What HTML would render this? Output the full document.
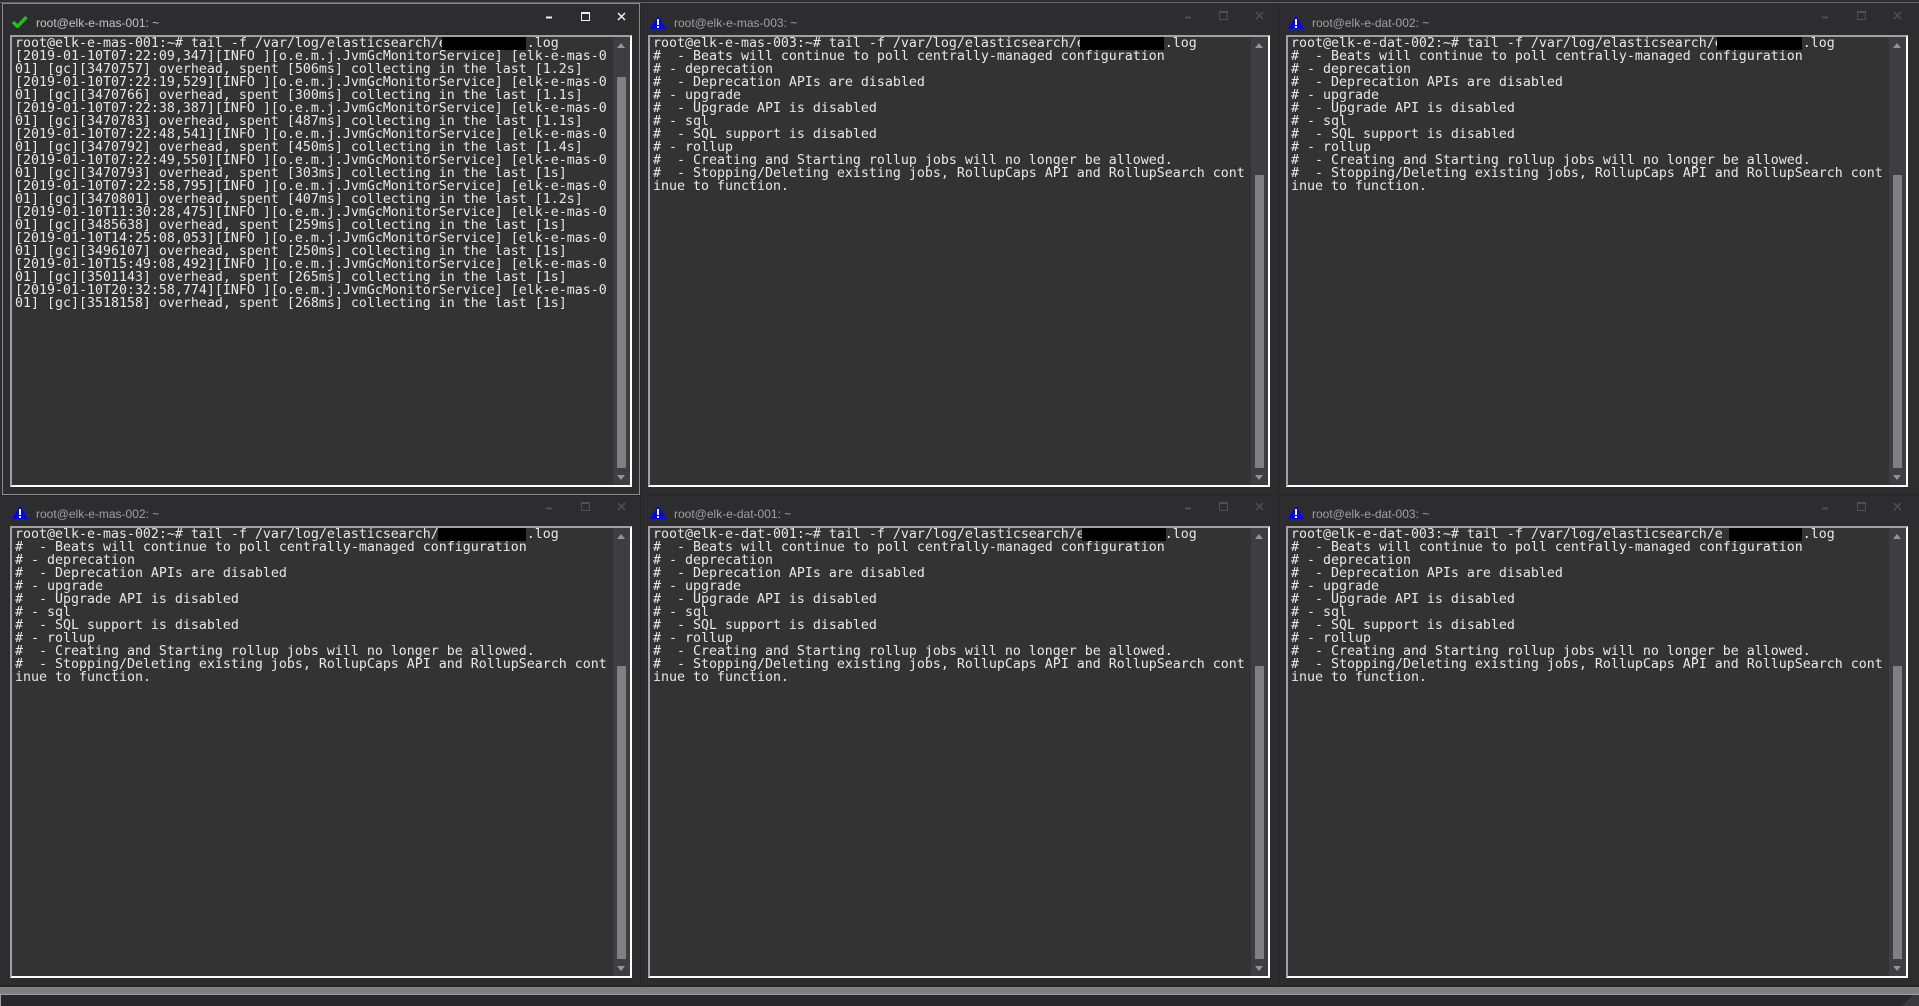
<!DOCTYPE html>
<html><head><meta charset="utf-8">
<style>
html,body{margin:0;padding:0;background:#2d2d30;width:1919px;height:1006px;overflow:hidden}
.a{position:absolute}
.t{position:absolute;left:36px;top:15px;font:12px/16px "Liberation Sans",sans-serif;color:#a0a0a0;white-space:pre}
.f{position:absolute;box-sizing:border-box;width:622px;background:#333;border:2px solid;border-color:#a0a0a0 #fff #fff #a0a0a0}
pre{position:absolute;left:3px;top:0;margin:0;font:13.29px/13px "DejaVu Sans Mono",monospace;color:#e8e8e8}
.sb{position:absolute;right:0;top:0;bottom:0;width:17px;background:#3e3e42}
.th{position:absolute;left:4px;width:9px;background:#808080}
.up,.dn{position:absolute;left:4px;width:0;height:0;border-left:4.5px solid transparent;border-right:4.5px solid transparent}
.up{top:6px;border-bottom:5px solid #949494}
.dn{bottom:5px;border-top:5px solid #949494}
.k{position:absolute;top:0;height:13px;background:#000}
svg{position:absolute}
</style></head><body>

<div class="a" style="left:0;top:0;width:1919px;height:987px;background:#2d2d30"></div>
<div class="a" style="left:0;top:2px;width:1919px;height:1px;background:#666"></div>
<div class="a" style="left:0;top:985px;width:1919px;height:2px;background:#27272a"></div>
<div class="a" style="left:640px;top:3px;width:1px;height:982px;background:#27272a"></div>
<div class="a" style="left:1278px;top:3px;width:1px;height:982px;background:#27272a"></div>
<div class="a" style="left:0;top:495px;width:1919px;height:1px;background:#27272a"></div>
<div class="a" style="left:2px;top:3px;width:638px;height:492px;box-sizing:border-box;border:1px solid #8a8a8a"></div>

<!-- Pane 1 -->
<svg style="left:12px;top:15px" width="16" height="13" viewBox="0 0 16 13"><path d="M1 7l4.500 4.500L14.500 2" fill="none" stroke="#16c616" stroke-width="3.400"/></svg>
<div class="t" style="color:#c4c4c4">root@elk-e-mas-001: ~</div>
<svg style="left:546px;top:12px" width="80" height="10" viewBox="0 0 80 10" fill="none" stroke="#eee"><path d="M0 5.500h6" stroke-width="2"/><rect x="35.500" y="0.500" width="8" height="8"/><path d="M35.500 1h8" stroke-width="2"/><path d="M72 1l7 7M79 1l-7 7" stroke-width="1.500"/></svg>
<div class="f" style="left:10px;top:35px;height:452px">
<pre>root@elk-e-mas-001:~# tail -f /var/log/elasticsearch/e          .log
[2019-01-10T07:22:09,347][INFO ][o.e.m.j.JvmGcMonitorService] [elk-e-mas-0
01] [gc][3470757] overhead, spent [506ms] collecting in the last [1.2s]
[2019-01-10T07:22:19,529][INFO ][o.e.m.j.JvmGcMonitorService] [elk-e-mas-0
01] [gc][3470766] overhead, spent [300ms] collecting in the last [1.1s]
[2019-01-10T07:22:38,387][INFO ][o.e.m.j.JvmGcMonitorService] [elk-e-mas-0
01] [gc][3470783] overhead, spent [487ms] collecting in the last [1.1s]
[2019-01-10T07:22:48,541][INFO ][o.e.m.j.JvmGcMonitorService] [elk-e-mas-0
01] [gc][3470792] overhead, spent [450ms] collecting in the last [1.4s]
[2019-01-10T07:22:49,550][INFO ][o.e.m.j.JvmGcMonitorService] [elk-e-mas-0
01] [gc][3470793] overhead, spent [303ms] collecting in the last [1s]
[2019-01-10T07:22:58,795][INFO ][o.e.m.j.JvmGcMonitorService] [elk-e-mas-0
01] [gc][3470801] overhead, spent [407ms] collecting in the last [1.2s]
[2019-01-10T11:30:28,475][INFO ][o.e.m.j.JvmGcMonitorService] [elk-e-mas-0
01] [gc][3485638] overhead, spent [259ms] collecting in the last [1s]
[2019-01-10T14:25:08,053][INFO ][o.e.m.j.JvmGcMonitorService] [elk-e-mas-0
01] [gc][3496107] overhead, spent [250ms] collecting in the last [1s]
[2019-01-10T15:49:08,492][INFO ][o.e.m.j.JvmGcMonitorService] [elk-e-mas-0
01] [gc][3501143] overhead, spent [265ms] collecting in the last [1s]
[2019-01-10T20:32:58,774][INFO ][o.e.m.j.JvmGcMonitorService] [elk-e-mas-0
01] [gc][3518158] overhead, spent [268ms] collecting in the last [1s]</pre>
<div class="k" style="left:430px;width:84px"></div>
<div class="sb"><div class="up"></div><div class="th" style="top:40px;height:391px"></div><div class="dn"></div></div>
</div>

<!-- Pane 2 -->
<svg style="left:650px;top:16px" width="16" height="13" viewBox="0 0 16 13"><path d="M8 0L16 13H0z" fill="#0000ff"/><path d="M8 3v6M8 10v2" stroke="#fff" stroke-width="2"/></svg>
<div class="t" style="left:674px">root@elk-e-mas-003: ~</div>
<svg style="left:1184px;top:11px" width="80" height="10" viewBox="0 0 80 10" fill="none" stroke="#505050"><path d="M1 6.500h6" stroke-width="2"/><rect x="35.500" y="0.500" width="8" height="8"/><path d="M35.500 1h8" stroke-width="2"/><path d="M72 1l7 7M79 1l-7 7" stroke-width="1.500"/></svg>
<div class="f" style="left:648px;top:35px;height:452px">
<pre>root@elk-e-mas-003:~# tail -f /var/log/elasticsearch/e          .log
#  - Beats will continue to poll centrally-managed configuration
# - deprecation
#  - Deprecation APIs are disabled
# - upgrade
#  - Upgrade API is disabled
# - sql
#  - SQL support is disabled
# - rollup
#  - Creating and Starting rollup jobs will no longer be allowed.
#  - Stopping/Deleting existing jobs, RollupCaps API and RollupSearch cont
inue to function.</pre>
<div class="k" style="left:430px;width:84px"></div>
<div class="sb"><div class="up"></div><div class="th" style="top:138px;height:293px"></div><div class="dn"></div></div>
</div>

<!-- Pane 3 -->
<svg style="left:1288px;top:16px" width="16" height="13" viewBox="0 0 16 13"><path d="M8 0L16 13H0z" fill="#0000ff"/><path d="M8 3v6M8 10v2" stroke="#fff" stroke-width="2"/></svg>
<div class="t" style="left:1312px">root@elk-e-dat-002: ~</div>
<svg style="left:1822px;top:11px" width="80" height="10" viewBox="0 0 80 10" fill="none" stroke="#505050"><path d="M0 6.500h6" stroke-width="2"/><rect x="35.500" y="0.500" width="8" height="8"/><path d="M35.500 1h8" stroke-width="2"/><path d="M72 1l7 7M79 1l-7 7" stroke-width="1.500"/></svg>
<div class="f" style="left:1286px;top:35px;height:452px">
<pre>root@elk-e-dat-002:~# tail -f /var/log/elasticsearch/e          .log
#  - Beats will continue to poll centrally-managed configuration
# - deprecation
#  - Deprecation APIs are disabled
# - upgrade
#  - Upgrade API is disabled
# - sql
#  - SQL support is disabled
# - rollup
#  - Creating and Starting rollup jobs will no longer be allowed.
#  - Stopping/Deleting existing jobs, RollupCaps API and RollupSearch cont
inue to function.</pre>
<div class="k" style="left:429px;width:85px"></div>
<div class="sb"><div class="up"></div><div class="th" style="top:138px;height:293px"></div><div class="dn"></div></div>
</div>

<!-- Pane 4 -->
<svg style="left:12px;top:506px" width="16" height="13" viewBox="0 0 16 13"><path d="M8 0L16 13H0z" fill="#0000ff"/><path d="M8 3v6M8 10v2" stroke="#fff" stroke-width="2"/></svg>
<div class="t" style="top:506px">root@elk-e-mas-002: ~</div>
<svg style="left:546px;top:502px" width="80" height="10" viewBox="0 0 80 10" fill="none" stroke="#505050"><path d="M0 6.500h6" stroke-width="2"/><rect x="35.500" y="0.500" width="8" height="8"/><path d="M35.500 1h8" stroke-width="2"/><path d="M72 1l7 7M79 1l-7 7" stroke-width="1.500"/></svg>
<div class="f" style="left:10px;top:526px;height:452px">
<pre>root@elk-e-mas-002:~# tail -f /var/log/elasticsearch/e          .log
#  - Beats will continue to poll centrally-managed configuration
# - deprecation
#  - Deprecation APIs are disabled
# - upgrade
#  - Upgrade API is disabled
# - sql
#  - SQL support is disabled
# - rollup
#  - Creating and Starting rollup jobs will no longer be allowed.
#  - Stopping/Deleting existing jobs, RollupCaps API and RollupSearch cont
inue to function.</pre>
<div class="k" style="left:426px;width:88px"></div>
<div class="sb"><div class="up"></div><div class="th" style="top:138px;height:293px"></div><div class="dn"></div></div>
</div>

<!-- Pane 5 -->
<svg style="left:650px;top:506px" width="16" height="13" viewBox="0 0 16 13"><path d="M8 0L16 13H0z" fill="#0000ff"/><path d="M8 3v6M8 10v2" stroke="#fff" stroke-width="2"/></svg>
<div class="t" style="left:674px;top:506px">root@elk-e-dat-001: ~</div>
<svg style="left:1184px;top:502px" width="80" height="10" viewBox="0 0 80 10" fill="none" stroke="#505050"><path d="M1 6.500h6" stroke-width="2"/><rect x="35.500" y="0.500" width="8" height="8"/><path d="M35.500 1h8" stroke-width="2"/><path d="M72 1l7 7M79 1l-7 7" stroke-width="1.500"/></svg>
<div class="f" style="left:648px;top:526px;height:452px">
<pre>root@elk-e-dat-001:~# tail -f /var/log/elasticsearch/e          .log
#  - Beats will continue to poll centrally-managed configuration
# - deprecation
#  - Deprecation APIs are disabled
# - upgrade
#  - Upgrade API is disabled
# - sql
#  - SQL support is disabled
# - rollup
#  - Creating and Starting rollup jobs will no longer be allowed.
#  - Stopping/Deleting existing jobs, RollupCaps API and RollupSearch cont
inue to function.</pre>
<div class="k" style="left:432px;width:84px"></div>
<div class="sb"><div class="up"></div><div class="th" style="top:138px;height:293px"></div><div class="dn"></div></div>
</div>

<!-- Pane 6 -->
<svg style="left:1288px;top:506px" width="16" height="13" viewBox="0 0 16 13"><path d="M8 0L16 13H0z" fill="#0000ff"/><path d="M8 3v6M8 10v2" stroke="#fff" stroke-width="2"/></svg>
<div class="t" style="left:1312px;top:506px">root@elk-e-dat-003: ~</div>
<svg style="left:1822px;top:502px" width="80" height="10" viewBox="0 0 80 10" fill="none" stroke="#505050"><path d="M0 6.500h6" stroke-width="2"/><rect x="35.500" y="0.500" width="8" height="8"/><path d="M35.500 1h8" stroke-width="2"/><path d="M72 1l7 7M79 1l-7 7" stroke-width="1.500"/></svg>
<div class="f" style="left:1286px;top:526px;height:452px">
<pre>root@elk-e-dat-003:~# tail -f /var/log/elasticsearch/e          .log
#  - Beats will continue to poll centrally-managed configuration
# - deprecation
#  - Deprecation APIs are disabled
# - upgrade
#  - Upgrade API is disabled
# - sql
#  - SQL support is disabled
# - rollup
#  - Creating and Starting rollup jobs will no longer be allowed.
#  - Stopping/Deleting existing jobs, RollupCaps API and RollupSearch cont
inue to function.</pre>
<div class="k" style="left:441px;width:73px"></div>
<div class="sb"><div class="up"></div><div class="th" style="top:138px;height:293px"></div><div class="dn"></div></div>
</div>

<!-- Bottom bar -->
<div class="a" style="left:0;top:987px;width:1919px;height:7px;background:#808080"></div>
<div class="a" style="left:0;top:994px;width:1919px;height:1px;background:#a0a0a0"></div>
<div class="a" style="left:0;top:995px;width:1919px;height:11px;background:#28282a"></div>
<div class="a" style="left:0;top:995px;width:1px;height:11px;background:#a0a0a0"></div>
<svg style="left:1902px;top:995px" width="17" height="11" viewBox="0 0 17 11"><path d="M0 11L11 0H17V11z" fill="#3a3a3c"/></svg>
</body></html>
